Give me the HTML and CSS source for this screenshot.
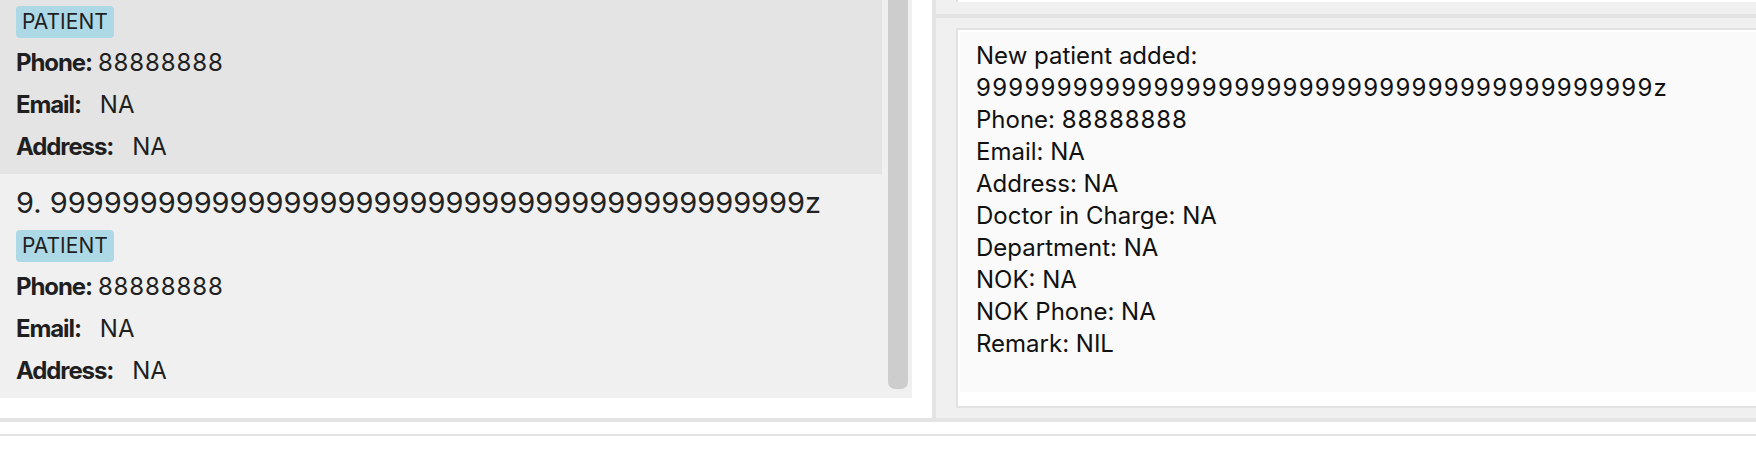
FILE: index.html
```html
<!DOCTYPE html>
<html lang="en">
<head>
<meta charset="utf-8">
<title>Patient list</title>
<link rel="stylesheet" href="styles.css">
</head>
<body>
<div class="app">
  <div class="main">
    <div class="left-pane">
      <div class="list">
        <div class="cards">
          <div class="card selected">
            <div class="card-title">8. 88888888</div>
            <div class="tags"><span class="tag">PATIENT</span></div>
            <div class="fields">
              <div class="field"><span class="label">Phone:</span><span class="value tight num-s">88888888</span></div>
              <div class="field"><span class="label">Email:</span><span class="value">NA</span></div>
              <div class="field"><span class="label">Address:</span><span class="value">NA</span></div>
            </div>
          </div>
          <div class="card">
            <div class="card-title">9. 999999999999999999999999999999999999999999z</div>
            <div class="tags"><span class="tag">PATIENT</span></div>
            <div class="fields">
              <div class="field"><span class="label">Phone:</span><span class="value tight num-s">88888888</span></div>
              <div class="field"><span class="label">Email:</span><span class="value">NA</span></div>
              <div class="field"><span class="label">Address:</span><span class="value">NA</span></div>
            </div>
          </div>
        </div>
        <div class="scroll-track"><div class="scroll-thumb"></div></div>
      </div>
    </div>
    <div class="divider-v"></div>
    <div class="right-pane">
      <div class="command-pane"><div class="command-box"></div></div>
      <div class="divider-h"></div>
      <div class="result-pane">
        <div class="result-box">
          <div class="result-text"><div>New patient added:</div><div class="num">999999999999999999999999999999999999999999z</div><div>Phone: <span class="num-s">88888888</span></div><div>Email: NA</div><div>Address: NA</div><div>Doctor in Charge: NA</div><div>Department: NA</div><div>NOK: NA</div><div>NOK Phone: NA</div><div>Remark: NIL</div></div>
        </div>
      </div>
    </div>
  </div>
  <div class="divider-bottom"></div>
  <div class="footer-gap"></div>
  <div class="footer-line"></div>
  <div class="status-bar"><span class="status-text">/data/patientlist.json</span></div>
</div>
</body>
</html>
```
FILE: styles.css
```css
* { box-sizing: border-box; }
html, body { margin: 0; padding: 0; background: #ffffff; }
body {
  font-family: Inter, "Noto Sans", "Liberation Sans", sans-serif;
  color: #1f1f1f;
  width: 1756px;
  height: 450px;
  overflow: hidden;
}
.app { display: flex; flex-direction: column; }
.main { display: flex; height: 418px; }

.left-pane {
  width: 932px;
  padding: 0 20px 20px 0;
  background: #ffffff;
}
.list {
  display: flex;
  height: 398px;
  background: #f0f0f0;
  overflow: hidden;
}
.cards { width: 882px; margin-top: -50px; }
.card {
  height: 224px;
  padding-left: 16px;
  background: #f0f0f0;
}
.card.selected { background: #e4e4e4; }
.card-title {
  height: 56px;
  padding-top: 2px;
  line-height: 54px;
  font-size: 29px;
  white-space: nowrap;
  color: #222222;
}
.tags { height: 32px; display: flex; }
.tag {
  display: inline-block;
  height: 32px;
  line-height: 32px;
  padding: 0 6px;
  font-size: 21px;
  background: #add8e6;
  border-radius: 4px;
  color: #1f1f1f;
}
.fields { padding-top: 4px; }
.field {
  display: flex;
  height: 42px;
  line-height: 42px;
  font-size: 24px;
}
.label { font-weight: 700; letter-spacing: -1.1px; }
.value { margin-left: 19px; }
.value.tight { margin-left: 6px; }
.num { letter-spacing: 1.25px; }
.num-s { letter-spacing: 0.9px; }

.scroll-track {
  width: 30px;
  padding: 0 4px 9px 6px;
}
.scroll-thumb {
  height: 100%;
  background: #cdcdcd;
  border-radius: 0 0 7px 7px;
}

.divider-v { width: 4px; background: #e4e4e4; }
.right-pane {
  flex: 1;
  display: flex;
  flex-direction: column;
  background: #f0f0f0;
}
.command-pane { height: 14px; padding-left: 20px; }
.command-box {
  height: 2px;
  background: #ffffff;
  border-left: 2px solid #e0e0e0;
}
.divider-h { height: 4px; background: #e4e4e4; }
.result-pane {
  flex: 1;
  padding: 10px 0 10px 20px;
}
.result-box {
  height: 380px;
  border: 2px solid #e2e2e2;
  border-right: none;
  background: #ffffff;
  padding: 2px 0 14px 2px;
}
.result-text {
  height: 100%;
  background: #fafafa;
  padding: 8px 0 0 16px;
  white-space: nowrap;
  font-size: 24px;
  line-height: 32px;
  color: #111111;
}

.divider-bottom { height: 4px; background: #e4e4e4; }
.footer-gap { height: 12px; }
.footer-line { height: 2px; background: #e4e4e4; }
.status-bar { height: 40px; padding: 13px 0 0 8px; line-height: 20px; }
.status-text { font-size: 16px; line-height: 20px; color: #1f1f1f; }
```
